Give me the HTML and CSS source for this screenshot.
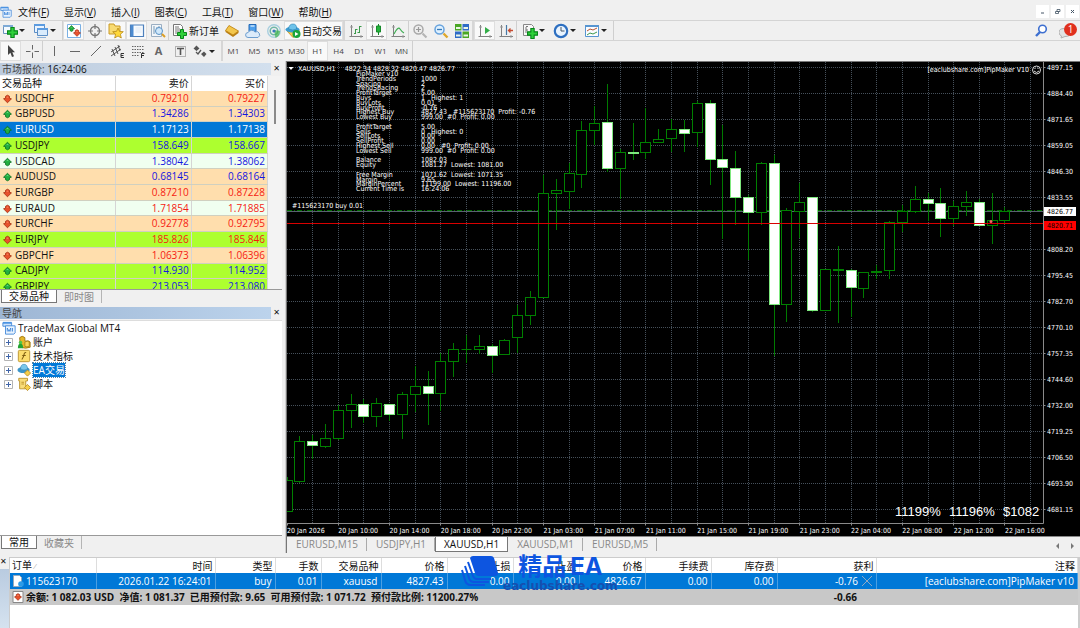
FILE: index.html
```html
<!DOCTYPE html>
<html lang="zh-CN">
<head>
<meta charset="utf-8">
<title>TradeMax Global MT4</title>
<link rel="stylesheet" href="styles.css">
</head>
<body>
<svg class="defs" aria-hidden="true">
  <symbol id="up" viewBox="0 0 10 10"><path d="M5 .8 9.400 5.200 7.200 5.800V8L5 9.200 2.800 8V5.800L.6 5.200Z" fill="#22b040" stroke="#0c6d20" stroke-width=".9"/><path d="M4 4 5 3l1 1" stroke="#8ae89a" fill="none" stroke-width=".8"/></symbol>
  <symbol id="down" viewBox="0 0 10 10"><path d="M5 9.200.6 4.800l2.200-.6V2L5 .8 7.200 2v2.200l2.200.6Z" fill="#e8512c" stroke="#a32b0e" stroke-width=".9"/><path d="M4 3h2" stroke="#ff9f78" fill="none" stroke-width=".8"/></symbol>
  <symbol id="plus" viewBox="0 0 10 10"><path d="M3.500.5h3v3h3v3h-3v3h-3v-3h-3v-3h3Z" fill="#2fd03a" stroke="#07861a"/></symbol>
  <symbol id="mt" viewBox="0 0 16 16"><path d="M1 2h10v4H1Z" fill="#cfe4fb" stroke="#3f86d8"/><path d="M1 1h10v2H1Z" fill="#4b93e2"/><path d="M4 5.500h11v8l-1.500 1.500H4Z" fill="#e8f3ff" stroke="#3f86d8"/><path d="M6 12V8l2 4 2-4v4M12 8v4" stroke="#3f86d8" fill="none"/></symbol>
  <symbol id="axes" viewBox="0 0 16 16"><path d="M3.500 2v11.500M1.500 13.500H15" fill="none" stroke="#808080"/><path d="M2 4h3M13 12v3" stroke="#9a9a9a"/></symbol>
  <symbol id="expand" viewBox="0 0 9 9"><path d="M.5.5h8v8h-8Z" fill="#fff" stroke="#b4b4b4"/><path d="M2 4.500h5M4.500 2v5" stroke="#4165a8"/></symbol>
</svg>

<header class="menubar">
  <svg class="logo"><use href="#mt"/></svg>
  <nav class="menus">
    <button>文件(<u>F</u>)</button><button>显示(<u>V</u>)</button><button>插入(<u>I</u>)</button><button>图表(<u>C</u>)</button><button>工具(<u>T</u>)</button><button>窗口(<u>W</u>)</button><button>帮助(<u>H</u>)</button>
  </nav>
  <div class="winbtns">
    <button aria-label="最小化"><svg viewBox="0 0 7 7"><path d="M2 5h3" stroke="#456"/></svg></button>
    <button aria-label="还原"><svg viewBox="0 0 7 7"><path d="M3 1.500h3v2H3ZM1.500 3.500h3v2h-3Z" stroke="#456" fill="none" stroke-width=".8"/></svg></button>
    <button aria-label="关闭"><svg viewBox="0 0 7 7"><path d="m2 2 3 3m0-3L2 5" stroke="#456"/></svg></button>
  </div>
</header>

<div class="toolbar main-tools">
  <button class="tool drop" aria-label="新图表"><svg viewBox="0 0 16 16"><path d="M1.500 2.500h9v8h-9Z" fill="#f4faff" stroke="#6b93bd"/><path d="M1 2h10v2H1Z" fill="#7eaad6"/><use href="#plus" x="5" y="4" width="11" height="11"/></svg><i></i></button>
  <button class="tool drop" aria-label="配置"><svg viewBox="0 0 16 16"><path d="M1.500 1.500h10v8h-10Z" fill="#eaf4ff" stroke="#5d8fc6"/><path d="M1 1h11v2H1Z" fill="#5b9be0"/><path d="M4.500 5.500h10v7h-10Z" fill="#d9ebfc" stroke="#5d8fc6"/><path d="M4 5h11v2H4Z" fill="#5b9be0"/><path d="M4 14.500h9" stroke="#8fb2d8"/></svg><i></i></button>
  <span class="sep"></span>
  <button class="tool on" aria-label="市场报价"><svg viewBox="0 0 16 16"><path d="M1.500 1.500h13v13h-13Z" fill="#fff" stroke="#7ab0e4"/><use href="#up" x="2" y="2" width="7" height="7"/><use href="#down" x="7" y="6" width="8" height="8"/></svg></button>
  <button class="tool" aria-label="数据窗口"><svg viewBox="0 0 16 16"><circle cx="8" cy="8" r="4.500" fill="none" stroke="#777" stroke-width="1.400"/><path d="M8 1v5M8 10v5M1 8h5M10 8h5" stroke="#777" stroke-width="1.200"/></svg></button>
  <button class="tool on" aria-label="导航"><svg viewBox="0 0 16 16"><path d="M1 3V1h5l1 2h5v8H1Z" fill="#f8db72" stroke="#c99a26"/><path d="m10 5 1.500 3.400 3.800.3-2.900 2.500.9 3.800-3.300-2-3.300 2 .9-3.800L4.700 8.700l3.800-.3Z" fill="#ffd83a" stroke="#b88a18" stroke-width=".8"/></svg></button>
  <button class="tool on" aria-label="终端"><svg viewBox="0 0 16 16"><path d="M1.500 2h13v11.500h-13Z" fill="#f7fbff" stroke="#4d80bc" stroke-width="1.200"/><path d="M2 2h2.500v11H2Z" fill="#4c8bd0"/><path d="M6.500 5h6M6.500 7h6M6.500 9h6" stroke="#d5e2ee" stroke-width=".7"/></svg></button>
  <button class="tool" aria-label="策略测试"><svg viewBox="0 0 16 16"><path d="M1.500 1.500h10v12h-10Z" fill="#f2f6fa" stroke="#9aaec2"/><path d="M4 3v8M7 4v6M9 3v8" stroke="#7799b5"/><circle cx="9" cy="8" r="3.500" fill="#cfe8fb" stroke="#5a92c5"/><path d="m12 11 3 3" stroke="#dc9f26" stroke-width="2"/></svg></button>
  <span class="sep"></span>
  <button class="tool label"><svg viewBox="0 0 16 16"><path d="M2.500 1.500h7l2 2v9h-9Z" fill="#fff" stroke="#777"/><path d="M4 4h4M4 6h5M4 8h5M4 10h2" stroke="#777"/><use href="#plus" x="6" y="6" width="10" height="10"/></svg><span>新订单</span></button>
  <button class="tool" aria-label="MetaEditor"><svg viewBox="0 0 16 16"><path d="M5 2.500 14.500 8v2L9 14 1.500 9V7.500Z" fill="#b97e13"/><path d="M5 2.500 14.500 8 9 12 1.500 7.500Z" fill="#f3c64b" stroke="#b97e13" stroke-width=".7"/></svg></button>
  <button class="tool" aria-label="社区"><svg viewBox="0 0 16 16"><path d="M4 1.500h7v7H4Z" fill="#4da0ed" stroke="#2368b6"/><path d="M5.500 3h4" stroke="#fff"/><path d="M3 14.500a2.500 2.500 0 0 1 .2-5A4 4 0 0 1 10 9a3 3 0 0 1 3 5.500Z" fill="#dcebfa" stroke="#6c9dce"/></svg></button>
  <button class="tool" aria-label="信号"><svg viewBox="0 0 16 16" fill="none"><circle cx="8" cy="8" r="6.300" stroke="#a9cfdf" stroke-width="1.400"/><circle cx="8" cy="8" r="3.800" stroke="#6fb6a6" stroke-width="1.500"/><path d="M8 7 9.500 15Q14 13 14 8" fill="#3cb34a" fill-opacity=".7"/><circle cx="8" cy="8" r="1.600" fill="#3978bd"/></svg></button>
  <button class="tool label on auto"><svg viewBox="0 0 16 16"><path d="m2 8 6 6.500 6-5.500V7Z" fill="#f4cb4c" stroke="#bd8d1c" stroke-width=".8"/><ellipse cx="7.500" cy="6.500" rx="7" ry="3" fill="#3b9cd2"/><path d="M3.500 6Q4 1 8 1t3.500 5Q8 8 3.500 6" fill="#6dc2ea" stroke="#2981b4" stroke-width=".6"/><circle cx="11.500" cy="11" r="4" fill="#18a53a"/><path d="M10 9v4l3.500-2Z" fill="#fff"/></svg><span>自动交易</span></button>
  <span class="sep grip"></span>
  <button class="tool" aria-label="柱状图"><svg viewBox="0 0 16 16"><use href="#axes"/><path d="M7.500 6v5M11.500 3v7M11.500 3.500h2M9.500 9.500h2M6 10.500h1.500M7.500 6.500h2" stroke="#3a9a4a"/></svg></button>
  <button class="tool on" aria-label="蜡烛图"><svg viewBox="0 0 16 16"><use href="#axes"/><path d="M9.500 1v11" stroke="#168a2a"/><path d="M7.500 3h4v6h-4Z" fill="#24b33b" stroke="#168a2a"/></svg></button>
  <button class="tool" aria-label="折线图"><svg viewBox="0 0 16 16"><use href="#axes"/><path d="M4 11Q8 3 10 6t4 4" stroke="#3fae54" fill="none" stroke-width="1.200"/></svg></button>
  <span class="sep"></span>
  <button class="tool" aria-label="放大"><svg viewBox="0 0 16 16"><circle cx="6.500" cy="6.500" r="4.500" fill="#eee" stroke="#a9a9a9" stroke-width="1.500"/><path d="M4 6.500h5M6.500 4v5" stroke="#999" stroke-width="1.200"/><path d="m10.500 10.500 4 4" stroke="#b5b5b5" stroke-width="2.200"/></svg></button>
  <button class="tool" aria-label="缩小"><svg viewBox="0 0 16 16"><circle cx="6.500" cy="6.500" r="4.500" fill="#dff1ff" stroke="#66a2dd" stroke-width="1.500"/><path d="M4 6.500h5" stroke="#377ab9" stroke-width="1.300"/><path d="m10.500 10.500 4 4" stroke="#dda72c" stroke-width="2.400"/></svg></button>
  <button class="tool" aria-label="平铺窗口"><svg viewBox="0 0 16 16"><path d="M1 1h6.500v6.500H1ZM8.500 8.500H15V15H8.500Z" fill="#49a624"/><path d="M8.500 1H15v6.500H8.500ZM1 8.500h6.500V15H1Z" fill="#2e6bc7"/><path d="M2 4h4.500v2H2ZM9.500 4H14v2H9.500ZM2 11.500h4.500v2H2ZM9.500 11.500H14v2H9.500Z" fill="#e9f5e5"/></svg></button>
  <span class="sep grip"></span>
  <button class="tool on" aria-label="自动滚动"><svg viewBox="0 0 16 16"><use href="#axes"/><path d="m8 4 5 3.500L8 11Z" fill="#32ad47"/></svg></button>
  <button class="tool" aria-label="图表平移"><svg viewBox="0 0 16 16"><use href="#axes"/><path d="M8.500 2v10" stroke="#4779a6" stroke-width="1.200"/><path d="M15 7.500h-4M12.500 5.500l-2 2 2 2" stroke="#c54b30" fill="none" stroke-width="1.300"/></svg></button>
  <span class="sep wide"></span>
  <button class="tool drop" aria-label="指标"><svg viewBox="0 0 16 16"><path d="M1.500 1.500h8l2 2v9h-10Z" fill="#f8f8f8" stroke="#888"/><path d="M4 4v6M6 3.500h-2M4 7h2" stroke="#777"/><use href="#plus" x="5" y="5" width="11" height="11"/></svg><i></i></button>
  <button class="tool drop" aria-label="周期"><svg viewBox="0 0 16 16"><circle cx="8" cy="8" r="6.200" fill="#e9f4ff" stroke="#2d6fc1" stroke-width="2.200"/><path d="M8 4v4h3.500" stroke="#456" fill="none"/></svg><i></i></button>
  <button class="tool drop" aria-label="模板"><svg viewBox="0 0 16 16"><path d="M1.500 2.500h13v11h-13Z" fill="#fafcff" stroke="#5795d1"/><path d="M1 2h14v2H1Z" fill="#5795d1"/><path d="m3 8 3-2 3 1 4-2" stroke="#b65432" fill="none"/><path d="m3 12 3-2 3 1 4-2" stroke="#3f9a4d" fill="none"/></svg><i></i></button>
  <span class="sep"></span>
  <span class="spacer"></span>
  <button class="tool search" aria-label="搜索"><svg viewBox="0 0 16 16"><circle cx="9.500" cy="6" r="3.800" fill="#fff" stroke="#3d6fd0" stroke-width="1.600"/><path d="m7 9-4 4" stroke="#3d6fd0" stroke-width="2.400"/></svg></button>
  <button class="tool notice" aria-label="通知 1"><svg viewBox="0 0 16 16"><path d="M0 9.500q0-4 5-4t6 4-5 4l-4 1.500.5-2Q0 12 0 9.500" fill="#e2e2e2" stroke="#b0b0b0"/></svg><b>1</b></button>
</div>

<div class="toolbar draw-tools">
  <button class="tool on" aria-label="光标"><svg viewBox="0 0 16 16"><path d="M5 2v10l2.400-2.200L9 14l2-.8-1.700-4H12Z" fill="#444"/></svg></button>
  <button class="tool" aria-label="十字"><svg viewBox="0 0 16 16"><path d="M8.500 2v4.500M8.500 9.500V15M2 8.500h4.500M10.500 8.500H15" stroke="#666"/></svg></button>
  <span class="sep"></span>
  <button class="tool" aria-label="垂直线"><svg viewBox="0 0 16 16"><path d="M8.500 3v10" stroke="#666"/></svg></button>
  <button class="tool" aria-label="水平线"><svg viewBox="0 0 16 16"><path d="M3 8.500h10" stroke="#666"/></svg></button>
  <button class="tool" aria-label="趋势线"><svg viewBox="0 0 16 16"><path d="M3 13 13 3" stroke="#666"/></svg></button>
  <button class="tool" aria-label="等距通道"><svg viewBox="0 0 16 16"><path d="m2 9 9-6M2 13l10-7M3 6l3 7M6 4l3 7M9 2l2 6" stroke="#555"/><path d="M15 10.500h-3v4h3M12 12.500h2.500" stroke="#333" fill="none"/></svg></button>
  <button class="tool" aria-label="斐波那契"><svg viewBox="0 0 16 16"><path d="M2 3.500h12M2 6.500h12M2 9.500h12M2 12.500h7" stroke="#666" stroke-dasharray="1.500 1"/><path d="M11.500 15v-4.500h3M11.500 12.500h2.500" stroke="#333" fill="none"/></svg></button>
  <button class="tool glyph">A</button>
  <button class="tool" aria-label="文字标签"><svg viewBox="0 0 16 16"><path d="M3.500 3.500h10v10h-10Z" fill="none" stroke="#777" stroke-dasharray="1 1"/><path d="M5 5.500h7M8.500 5.500V12" stroke="#555" stroke-width="1.600"/></svg></button>
  <button class="tool drop" aria-label="箭头"><svg viewBox="0 0 16 16"><path d="M4.500 2.500 7.500 5.500 4.500 8 1.500 5.500ZM12 8.500l2.500 2.500-2.500 3-3-3Z" fill="#555"/><path d="m4 9 2 2 3-4" stroke="#555" stroke-width="1.300" fill="none"/></svg><i></i></button>
  <span class="sep grip"></span>
  <button class="tool tf">M1</button><button class="tool tf">M5</button><button class="tool tf">M15</button><button class="tool tf">M30</button><button class="tool tf on">H1</button><button class="tool tf">H4</button><button class="tool tf">D1</button><button class="tool tf">W1</button><button class="tool tf">MN</button>
  <span class="sep"></span>
</div>

<main class="workspace">
  <aside class="side">
    <section class="panel">
      <div class="caption"><h2>市场报价: <em>16:24:06</em></h2><button aria-label="关闭">✕</button></div>
      <div class="quotes-view">
        <table class="quotes">
          <colgroup><col class="c-sym"><col class="c-px"><col class="c-px"></colgroup>
          <thead><tr><th>交易品种</th><th>卖价</th><th>买价</th></tr></thead>
          <tbody>
            <tr class="peach dn"><td><svg><use href="#down"/></svg>USDCHF</td><td>0.79210</td><td>0.79227</td></tr>
            <tr class="peach"><td><svg><use href="#up"/></svg>GBPUSD</td><td>1.34286</td><td>1.34303</td></tr>
            <tr class="selected"><td><svg><use href="#up"/></svg>EURUSD</td><td>1.17123</td><td>1.17138</td></tr>
            <tr class="lime"><td><svg><use href="#up"/></svg>USDJPY</td><td>158.649</td><td>158.667</td></tr>
            <tr class="mint"><td><svg><use href="#up"/></svg>USDCAD</td><td>1.38042</td><td>1.38062</td></tr>
            <tr class="peach"><td><svg><use href="#up"/></svg>AUDUSD</td><td>0.68145</td><td>0.68164</td></tr>
            <tr class="peach dn"><td><svg><use href="#down"/></svg>EURGBP</td><td>0.87210</td><td>0.87228</td></tr>
            <tr class="mint dn"><td><svg><use href="#down"/></svg>EURAUD</td><td>1.71854</td><td>1.71885</td></tr>
            <tr class="peach dn"><td><svg><use href="#down"/></svg>EURCHF</td><td>0.92778</td><td>0.92795</td></tr>
            <tr class="lime dn"><td><svg><use href="#down"/></svg>EURJPY</td><td>185.826</td><td>185.846</td></tr>
            <tr class="peach dn"><td><svg><use href="#down"/></svg>GBPCHF</td><td>1.06373</td><td>1.06396</td></tr>
            <tr class="lime"><td><svg><use href="#up"/></svg>CADJPY</td><td>114.930</td><td>114.952</td></tr>
            <tr class="lime"><td><svg><use href="#up"/></svg>GBPJPY</td><td>213.053</td><td>213.080</td></tr>
          </tbody>
        </table>
        <div class="scroll"><span></span></div>
      </div>
      <div class="tabs"><button class="active">交易品种</button><button>即时图</button></div>
    </section>
    <section class="panel navigator">
      <div class="caption strong"><h2>导航</h2><button aria-label="关闭">✕</button></div>
      <ul class="tree">
        <li><svg viewBox="0 0 16 16"><use href="#mt"/></svg><span>TradeMax Global MT4</span></li>
        <li class="sub"><svg class="ex"><use href="#expand"/></svg><svg viewBox="0 0 16 16"><path d="M3 3q3-3 6 0v4q5-1 6 1v6q-5 2-11 0Z" fill="#e5b72b" stroke="#9c7410"/><path d="M9 8q3-2 5 0v5q-3 1-5 0Z" fill="#f8d659" stroke="#9c7410" stroke-width=".8"/><circle cx="4" cy="8.500" r="2" fill="#4fc64b"/><path d="M1 15q0-5 3-5t3 5Z" fill="#22a333"/></svg><span>账户</span></li>
        <li class="sub"><svg class="ex"><use href="#expand"/></svg><svg viewBox="0 0 16 16"><rect x="1.500" y="1.500" width="13" height="13" rx="1.500" fill="#fbdd6e" stroke="#b88f28"/><path d="M10.500 4Q8.500 3.500 8 6.500T5.500 12M6 7.500h4" stroke="#7d5c10" fill="none" stroke-width="1.200"/></svg><span>技术指标</span></li>
        <li class="sub"><svg class="ex"><use href="#expand"/></svg><svg viewBox="0 0 16 16"><ellipse cx="7.500" cy="8" rx="7" ry="3.500" fill="#3a95c9"/><path d="M4 7Q4 1.500 8 1.500T12 7Q8 9 4 7" fill="#79c7ea" stroke="#2a7dad" stroke-width=".6"/><path d="m12 8 3.500 3.500L12 15l-3.500-3.500Z" fill="#f6cf4a" stroke="#b88f28"/></svg><span class="picked">EA交易</span></li>
        <li class="sub"><svg class="ex"><use href="#expand"/></svg><svg viewBox="0 0 16 16"><path d="M2 1.500h10v3h-2v9H3v-9H2Z" fill="#f9dd7a" stroke="#b88f28"/><path d="M5 6h3M5 8h3" stroke="#b88f28"/><path d="m12 8.500 3.500 3.500-3.500 3.500L8.500 12Z" fill="#f6cf4a" stroke="#b88f28"/></svg><span>脚本</span></li>
      </ul>
      <div class="tabs"><button class="active short">常用</button><button>收藏夹</button></div>
    </section>
  </aside>

  <section class="chart-pane">
    <svg id="chart" class="chart" viewBox="287 62 793 474" role="img" aria-label="XAUUSD,H1"></svg>
    <div class="chart-tabs"><button>EURUSD,M15</button><button>USDJPY,H1</button><button class="active">XAUUSD,H1</button><button>XAUUSD,M1</button><button>EURUSD,M5</button>
      <span class="arrows"><svg viewBox="0 0 20 8"><path d="M4 1v6L1 4ZM16 1v6l3-3Z" fill="#777"/></svg></span></div>
  </section>
</main>

<section class="terminal">
  <div class="rail"><button aria-label="关闭">✕</button></div>
  <div class="orders-view">
    <table class="orders">
      <colgroup><col class="w-id"><col class="w-time"><col class="w-60"><col class="w-lot"><col class="w-60"><col class="w-66"><col class="w-66"><col class="w-66"><col class="w-66"><col class="w-66"><col class="w-66"><col class="w-profit"><col></colgroup>
      <thead><tr><th>订单 <small>⁄</small></th><th>时间</th><th>类型</th><th>手数</th><th>交易品种</th><th>价格</th><th>止损</th><th>止盈</th><th>价格</th><th>手续费</th><th>库存费</th><th>获利</th><th>注释</th></tr></thead>
      <tbody>
        <tr class="selected"><td><svg viewBox="0 0 12 12"><path d="M1.500.5h6l2 2v9h-8Z" fill="#fff" stroke="#9ab"/><circle cx="9" cy="9" r="2.800" fill="#2b9be8"/></svg>115623170</td><td>2026.01.22 16:24:01</td><td>buy</td><td>0.01</td><td>xauusd</td><td>4827.43</td><td>0.00</td><td>0.00</td><td>4826.67</td><td>0.00</td><td>0.00</td><td>-0.76 <button aria-label="平仓"><svg viewBox="0 0 12 12"><path d="m1 1 10 10M11 1 1 11" stroke="#8fa9c4"/></svg></button></td><td>[eaclubshare.com]PipMaker v10</td></tr>
        <tr class="total"><td colspan="11"><svg viewBox="0 0 12 12"><path d="M1 .5h10v11H1Z" fill="#fff" stroke="#888"/><use href="#down" x="2" y="2" width="8" height="8"/></svg>余额: 1 082.03 USD&nbsp; 净值: 1 081.37&nbsp; 已用预付款: 9.65&nbsp; 可用预付款: 1 071.72&nbsp; 预付款比例: 11200.27%</td><td class="sum">-0.66</td><td></td></tr>
      </tbody>
    </table>
  </div>
  <div class="brand">
    <svg viewBox="0 0 38 32"><path d="M9 2q1-2 3-2h18q2 0 3 2l4 15q0 3-3 3H18q-3 0-4-3Z" fill="#0d55e0"/><path d="M7 6 12 20q1 3 4 3h14M4 10l4 12q1 4 5 4h15M1 14l3 10q1 5 6 5h14" fill="none" stroke="#0d55e0" stroke-width="2"/></svg>
    <p><strong>精品<span>EA</span></strong><small>eaclubshare.com</small></p>
  </div>
</section>
<script src="chart.js"></script>
</body>
</html>
```
FILE: styles.css
```css
* { box-sizing: border-box; }
body {
  margin: 0;
  min-height: 100vh;
  display: flex;
  flex-direction: column;
  background: #f0f0f0;
  color: #111;
  font: 10px/14px "Open Sans", "Noto Sans CJK SC", sans-serif;
}
button { font: inherit; color: inherit; border: 0; background: none; padding: 0; margin: 0; }
h2, p, ul { margin: 0; padding: 0; }
table { border-collapse: collapse; table-layout: fixed; }
.defs { display: none; }

.menubar { display: flex; align-items: center; height: 20px; padding-top: 3px; }
.logo { width: 12px; height: 14px; }
.menus { display: flex; flex: 1; }
.menus button { padding: 0 8px 0 6px; margin-right: 1px; }
.winbtns { display: flex; gap: 2px; padding-right: 1px; }
.winbtns button { width: 13px; height: 13px; background: #fff; display: grid; place-items: center; }
.winbtns svg { width: 7px; height: 7px; }

.toolbar { display: flex; align-items: stretch; height: 21px; }
.main-tools { border-top: 1px solid #d4d4d4; border-bottom: 1px solid #d4d4d4; }
.draw-tools { height: 20px; }
.tool { width: 21px; display: flex; align-items: center; justify-content: center; }
.tool svg { width: 16px; height: 16px; flex: none; }
.tool.on { background: #f9f9f9; border: 1px solid #dedede; }
.tool.drop { width: 31px; justify-content: flex-start; padding-left: 2px; gap: 1px; }
.tool.drop i { border: 3px solid transparent; border-top-color: #222; border-bottom: 0; }
.tool.label { width: auto; padding: 0 2px; gap: 2px; }
.tool.auto { padding: 0; gap: 1px; }
.tool.glyph { font-size: 11px; font-weight: 700; color: #666; }
.tool.tf { font-size: 8px; color: #444; }
.sep { width: 1px; background: #cfcfcf; }
.sep.wide { margin-right: 3px; }
.sep.grip { width: 2px; background: #d6d6d6; }
.spacer { flex: 1; }
.notice { position: relative; margin: 0 3px 0 5px; }
.notice b { position: absolute; right: 0; top: 2px; width: 13px; height: 13px; border-radius: 50%; background: #e0301e; color: #fff; font: 10px/13px "Open Sans", sans-serif; }

.workspace { display: grid; grid-template-columns: 286px minmax(0, 1fr); }
.side { display: flex; flex-direction: column; gap: 2px; border-right: 1px solid #d0d0d0; }
.panel { padding-right: 3px; display: flex; flex-direction: column; }
.navigator { flex: 1; padding-bottom: 3px; }
.caption { display: flex; height: 15px; align-items: center; }
.caption h2 { flex: 1; padding-left: 2px; font-size: 10px; line-height: 12px; font-weight: 400; color: #444; background: linear-gradient(90deg, #bccbdd, #d3e0ee); }
.caption.strong { height: 14px; }
.caption.strong h2 { background: linear-gradient(90deg, #9db6d4, #bcd3ec); }
.caption em { font-style: normal; color: #111; }
.caption button { width: 11px; font: 8px/12px "DejaVu Sans", sans-serif; }
.quotes-view { display: flex; height: 213px; overflow: hidden; background: #f3f3f3; }
.quotes { width: 268px; height: 219px; flex: none; }
.c-sym { width: 115px; }
.quotes th { height: 15px; background: #fff; font-weight: 400; line-height: 13px; }
.quotes th, .quotes td { padding: 0 2px; text-align: right; border-right: 1px solid #d5d5d5; }
.quotes td { line-height: 13px; color: #1515e0; border-bottom: 1px solid #d0d0c0; }
.quotes th:first-child, .quotes td:first-child { text-align: left; }
.quotes td:first-child { color: #111; }
.quotes td svg { width: 9px; height: 10px; margin: 0 3px 0 1px; vertical-align: -2px; }
.quotes .dn td:not(:first-child) { color: #f51b12; }
.peach { background: #ffdead; }
.lime { background: #adff2f; }
.mint { background: #f0fff0; }
.quotes .selected td { background: #0078d7; color: #fff; }
.scroll { flex: 1; padding: 14px 6px; }
.scroll span { display: block; width: 2px; height: 34px; background: #8a8a8a; }

.tabs { display: flex; height: 15px; border-top: 1px solid #999; padding-left: 1px; }
.tabs button { padding: 0 7px; margin-bottom: 1px; color: #888; line-height: 12px; border-right: 1px solid #b5b5b5; }
.tabs .active { color: #111; background: #fff; border: solid #777; border-width: 0 1px 1px; }
.tree { flex: 1; list-style: none; background: #fff; border-top: 1px solid #ddd; padding-left: 2px; }
.tree li { display: flex; align-items: center; height: 14px; gap: 2px; }
.tree svg { width: 14px; height: 14px; }
.tree .ex { width: 9px; height: 9px; margin-right: 2px; }
.tree .sub { padding-left: 2px; }
.tree .picked { background: #0078d7; color: #fff; outline: 1px dotted #58a; }

.chart-pane { border-left: 1px solid #777; display: flex; flex-direction: column; }
.chart { display: block; width: 100%; height: auto; background: #000; border-top: 1px solid #777; font: 7px "DejaVu Sans Condensed", "DejaVu Sans", sans-serif; }
.chart text { fill: #fff; white-space: pre; }
.chart .end { text-anchor: end; }
.chart .big { font: 13px "Liberation Sans", Arial, sans-serif; }
.chart .grid { stroke: #46505a; stroke-dasharray: 1 1; }
.chart .axis { stroke: #8a8a8a; }
.chart .wick { stroke: #007a00; }
.chart .bull { stroke: #008000; fill: #000; }
.chart .bear { stroke: #7ee87e; fill: #fff; }
.chart .bid { stroke: #58636e; }
.chart .entry { stroke: #006c00; stroke-dasharray: 5 2 1 2; }
.chart .stop { stroke: #d80000; }
.chart .tag-bid { fill: #fff; }
.chart .tag-stop { fill: #f00; }
.chart .dark { fill: #000; }
.chart .face { fill: none; stroke: #ddd; }
.chart-tabs { display: flex; height: 17px; border-top: 1px solid #888; }
.chart-tabs button { padding: 0 8px 0 9px; margin: 1px 0 2px; color: #888; line-height: 13px; border-right: 1px solid #aaa; }
.chart-tabs .active { color: #111; background: #fff; margin: 0 0 1px; padding: 0 8px; border: solid #777; border-width: 0 1px 1px; }
.arrows { margin-left: auto; padding: 2px 5px; }
.arrows svg { width: 20px; height: 8px; }

.terminal { position: relative; flex: 1; display: flex; padding-top: 4px; }
.rail { width: 9px; background: linear-gradient(#f0f0f0 12px, #b9cbe0 12px, #d5e2ef); }
.rail button { display: block; font: 8px/10px "DejaVu Sans", sans-serif; }
.orders-view { flex: 1; background: #fff; border: 1px solid #ccc; border-width: 1px 2px 0 1px; }
.orders { width: 100%; }
.orders th { height: 15px; font-weight: 400; line-height: 14px; }
.orders th, .orders td { text-align: right; padding: 0 2px; border-right: 1px solid #ddd; white-space: nowrap; }
.orders td { height: 16px; padding: 0 3px; line-height: 14px; }
.orders th:first-child, .orders td:first-child { text-align: left; padding-left: 2px; }
.orders small { color: #aaa; font-size: 8px; }
.orders td svg { width: 12px; height: 12px; vertical-align: -2px; margin-right: 2px; }
.orders td button svg { margin: 0; }
.orders .selected td { background: #0078d7; color: #fff; border-color: #4b9fe2; }
.orders .total td { background: #c8c8c8; font-weight: 700; border: 0; }
.orders .total .sum { padding-right: 19px; }
.w-id { width: 86px; }
.w-time { width: 119px; }
.w-60 { width: 60px; }
.w-lot { width: 46px; }
.w-66 { width: 66px; }
.w-profit { width: 99px; }
.brand { position: absolute; left: 461px; top: 0; display: flex; gap: 4px; color: #0d55e0; }
.brand svg { width: 38px; height: 32px; margin-top: 3px; }
.brand p { display: flex; flex-direction: column; align-items: center; }
.brand strong { font: 700 24px/24px "Noto Sans CJK SC", sans-serif; }
.brand strong span { font-family: Inter, sans-serif; margin-left: 4px; }
.brand small { font: 700 12px/14px "DejaVu Sans", sans-serif; color: #164faf; }
```
FILE: chart.js
```js
const svg = document.getElementById('chart');
const NS = 'http://www.w3.org/2000/svg';
function add(tag, attrs, text) {
  const el = document.createElementNS(NS, tag);
  for (const k in attrs) el.setAttribute(k, attrs[k]);
  if (text !== undefined) el.textContent = text;
  svg.appendChild(el);
}
const line = (x1, y1, x2, y2, c) => add('line', { x1, y1, x2, y2, class: c });
const label = (x, y, s, c) => add('text', { x, y, class: c || '' }, s);
const snap = v => Math.floor(v) + 0.5;

const left = 287, top0 = 62, right = 1043.5, bottom = 523.5, step = 12.82;

for (let i = 1; i <= 29; i++) line(snap(left + i * 2 * step), top0, snap(left + i * 2 * step), bottom, 'grid');
const prices = ['4897.15', '4884.40', '4871.65', '4859.05', '4846.30', '4833.55', '', '4808.20', '4795.45', '4782.70', '4770.10', '4757.35', '4744.60', '4732.00', '4719.25', '4706.50', '4693.90', '4681.15'];
prices.forEach((p, i) => {
  const y = snap(67.3 + i * 26.02);
  line(left, y, right, y, 'grid');
  line(right, y, right + 2, y, 'axis');
  label(1047, y + 2.5, p);
});

// high, body top, body bottom, low, 1 = falling candle
const candles = [
  [477,480,511,512,0],[436,441,481,483,0],[435,441,445,459,1],[424,438,446,448,0],[405,410,438,440,0],[394,404,410,428,0],
  [399,404,416,423,1],[398,403,416,427,0],[404,404,414,421,1],[392,394,414,439,0],[366,386,394,412,0],[371,386,393,425,1],
  [353,361,393,411,0],[343,349,361,377,0],[335,349,349,363,0],[335,346,349,354,0],[344,346,355,373,1],[339,340,354,355,0],
  [305,315,337,353,0],[291,297,315,325,0],[175,193,297,298,0],[179,190,193,230,0],[163,173,191,209,0],[121,130,174,188,0],
  [106,123,130,145,0],[84,122,168,172,1],[149,152,168,199,0],[123,152,153,160,1],[108,142,152,159,0],[129,139,142,143,0],
  [119,129,138,152,0],[120,129,133,152,1],[101,103,132,147,0],[100,103,159,185,1],[125,159,167,239,1],[151,168,197,225,1],
  [195,197,212,260,1],[162,163,212,225,0],[155,163,304,356,1],[208,210,304,322,0],[183,202,211,238,0],[197,197,310,312,1],
  [269,269,310,310,0],[246,269,270,323,0],[269,270,287,317,1],[272,272,288,298,0],[265,271,272,279,0],[221,222,270,279,0],
  [205,211,222,232,0],[186,199,211,213,0],[193,199,203,221,1],[188,203,218,237,1],[201,206,218,226,0],[191,202,206,216,0],
  [199,202,225,225,1],[193,220,225,244,0],[207,211,220,223,0]
];
line(left, 210.5, right, 210.5, 'entry');
line(left, 211.5, right, 211.5, 'bid');
candles.forEach(([h, t, b, l, falling], i) => {
  const x = snap(left + i * step);
  line(x, h, x, l, 'wick');
  if (b === t) line(x - 5, t + 0.5, x + 5, t + 0.5, 'bull');
  else add('rect', { x: x - 5, y: t + 0.5, width: 10, height: b - t, class: falling ? 'bear' : 'bull' });
});
line(left, 223.5, right, 223.5, 'stop');
add('circle', { cx: 991, cy: 221.5, r: 1.5, fill: '#e66' });

line(right, top0, right, bottom, 'axis');
line(left, bottom, right, bottom, 'axis');
['20 Jan 2026', '20 Jan 10:00', '20 Jan 14:00', '20 Jan 18:00', '20 Jan 22:00', '21 Jan 03:00', '21 Jan 07:00', '21 Jan 11:00', '21 Jan 15:00', '21 Jan 19:00', '21 Jan 23:00', '22 Jan 04:00', '22 Jan 08:00', '22 Jan 12:00', '22 Jan 16:00']
  .forEach((s, i) => {
    const x = left + i * 4 * step;
    line(snap(x), bottom, snap(x), bottom + 2, 'axis');
    label(x, 532.5, s);
  });

add('rect', { x: 1044, y: 207, width: 32, height: 9, class: 'tag-bid' });
label(1047, 214, '4826.77', 'dark');
add('rect', { x: 1044, y: 221, width: 32, height: 9, class: 'tag-stop' });
label(1047, 228, '4820.71', 'dark');

add('path', { d: 'M288.5 67h5l-2.5 3Z', fill: '#fff' });
label(298, 71, 'XAUUSD,H1');
label(455, 71, '4822.34 4828.32 4820.47 4826.77', 'end');
label(292, 208, '#115623170 buy 0.01');
label(1029, 72, '[eaclubshare.com]PipMaker V10', 'end');
add('circle', { cx: 1036.5, cy: 70, r: 4, class: 'face' });
add('path', { d: 'M1034 71q2.5 3 5 0M1035 68v1M1038 68v1', class: 'face' });

const comment = [
  ['PipMaker v10', ''], ['TrendPeriods', '1000'], ['Spacing', '2'], ['TrendSpacing', '2'], ['ProfitTarget', '5.00'],
  ['Buys', '1   Highest: 1'], ['BuyLots', '0.01'], ['BuyProfit', '-0.76'], ['Highest Buy', '4827.43   #115623170  Profit: -0.76'],
  ['Lowest Buy', '999.00  #0  Profit: 0.00'], null, ['ProfitTarget', '5.00'], ['Sells', '0   Highest: 0'], ['SellLots', '0.00'],
  ['SellProfit', '0.00'], ['Highest Sell', '0.00   #0  Profit: 0.00'], ['Lowest Sell', '999.00  #0  Profit: 0.00'], null,
  ['Balance', '1082.03'], ['Equity', '1081.27  Lowest: 1081.00'], null, ['Free Margin', '1071.62  Lowest: 1071.35'],
  ['Margin', '9.65'], ['MarginPercent', '11199.00  Lowest: 11196.00'], ['Current Time is', '16:24:06']
];
comment.forEach((row, i) => {
  if (!row) return;
  label(356, 76 + i * 4.8, row[0]);
  label(421, 76 + i * 4.8, row[1]);
});
label(895, 516, '11199%', 'big');
label(949, 516, '11196%', 'big');
label(1003, 516, '$1082', 'big');
```
